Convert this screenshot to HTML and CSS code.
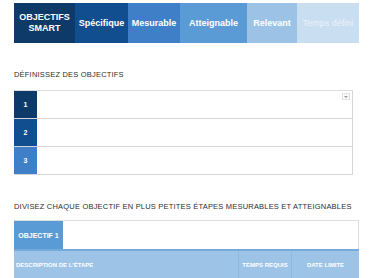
FILE: index.html
```html
<!DOCTYPE html>
<html lang="fr">
<head>
  <meta charset="UTF-8" />
  <meta name="viewport" content="width=device-width, initial-scale=1.0"/>
  <title>Objectifs SMART</title>
  <link rel="stylesheet" href="styles.css">
</head>
<body>

  <!-- BANDEAU SMART -->
  <nav class="smart">
    <div class="tab t-titre">OBJECTIFS<br>SMART</div>
    <div class="tab t-spec">Spécifique</div>
    <div class="tab t-mes">Mesurable</div>
    <div class="tab t-att">Atteignable</div>
    <div class="tab t-rel">Relevant</div>
    <div class="tab t-temps">Temps défini</div>
  </nav>

  <!-- OBJECTIFS -->
  <h2 class="titre titre-1">DÉFINISSEZ DES OBJECTIFS</h2>
  <div class="objectifs">
    <div class="ligne">
      <span class="num n1">1</span>
      <span class="champ"><span class="menu"></span></span>
    </div>
    <div class="ligne">
      <span class="num n2">2</span>
      <span class="champ"></span>
    </div>
    <div class="ligne">
      <span class="num n3">3</span>
      <span class="champ"></span>
    </div>
  </div>

  <!-- ÉTAPES -->
  <h2 class="titre titre-2">DIVISEZ CHAQUE OBJECTIF EN PLUS PETITES ÉTAPES MESURABLES ET ATTEIGNABLES</h2>
  <div class="etapes">
    <div class="etapes-haut">
      <span class="obj">OBJECTIF 1</span>
      <span class="obj-nom"></span>
    </div>
    <div class="etapes-entete">
      <span class="col-desc">DESCRIPTION DE L'ÉTAPE</span>
      <span class="col-temps">TEMPS REQUIS</span>
      <span class="col-date">DATE LIMITE</span>
    </div>
  </div>

</body>
</html>
```

FILE: styles.css
```css
body {
  margin: 0;
  background: #fff;
  font-family: 'Liberation Sans', Arial, sans-serif;
  overflow: hidden;
}
.smart {
  display: flex;
  height: 40px;
  margin: 3px 0 0 14px;
}
.tab {
  display: flex;
  align-items: center;
  justify-content: center;
  text-align: center;
  color: #fff;
  font-size: 9px;
  font-weight: bold;
  line-height: 11px;
}
.t-titre { width: 61px; background: #0e3a69; }
.t-spec { width: 53px; background: #104e90; }
.t-mes { width: 52px; background: #3e7fc8; }
.t-att { width: 67px; background: #5b9bd5; }
.t-rel { width: 50px; background: #9cc2e5; }
.t-temps { width: 62px; background: #cadef1; color: #eaf2fa; font-weight: normal; }

.titre {
  margin: 0 0 0 14px;
  font-size: 7.5px;
  font-weight: normal;
  line-height: 10px;
  letter-spacing: 0.2px;
  white-space: nowrap;
  color: #2e2e2e;
}
.titre-1 { margin-top: 27px; }
.titre-2 { margin-top: 27px; }

.objectifs {
  margin: 10px 0 0 14px;
  width: 339px;
  border-top: 1px solid #ddd;
}
.ligne {
  display: flex;
  height: 27px;
  border-bottom: 1px solid #d6d6d6;
}
.num {
  width: 23px;
  display: flex;
  align-items: center;
  justify-content: center;
  color: #fff;
  font-size: 7px;
  font-weight: bold;
}
.n1 { background: #0e3a69; }
.n2 { background: #104e90; }
.n3 { background: #3e7fc8; }
.champ {
  flex: 1;
  position: relative;
  border-right: 1px solid #d6d6d6;
}
.menu {
  position: absolute;
  top: 2px;
  right: 2px;
  width: 6px;
  height: 5px;
  border: 1px solid #e2e2e2;
  background: #fafafa;
}
.menu::after {
  content: "";
  position: absolute;
  left: 1px;
  top: 2px;
  border-left: 2px solid transparent;
  border-right: 2px solid transparent;
  border-top: 2px solid #999;
}

.etapes {
  margin: 8px 0 0 14px;
  width: 345px;
}
.etapes-haut {
  display: flex;
  height: 28px;
  border-top: 1px solid #ddd;
}
.obj {
  width: 49px;
  display: flex;
  align-items: center;
  justify-content: center;
  background: #5b9bd5;
  color: #fff;
  font-size: 7px;
  font-weight: bold;
}
.obj-nom {
  flex: 1;
  border-right: 1px solid #ddd;
}
.etapes-entete {
  display: flex;
  height: 40px;
  background: #9dc3e6;
  border-top: 2px solid #76a9dc;
  color: #fff;
  font-size: 6px;
  font-weight: bold;
}
.etapes-entete span {
  display: flex;
  align-items: center;
  height: 28px;
}
.col-desc { width: 222px; padding-left: 2px; }
.col-temps { width: 52px; justify-content: center; border-left: 1px solid #8db8e2; }
.col-date { flex: 1; justify-content: center; border-left: 1px solid #8db8e2; }
```
